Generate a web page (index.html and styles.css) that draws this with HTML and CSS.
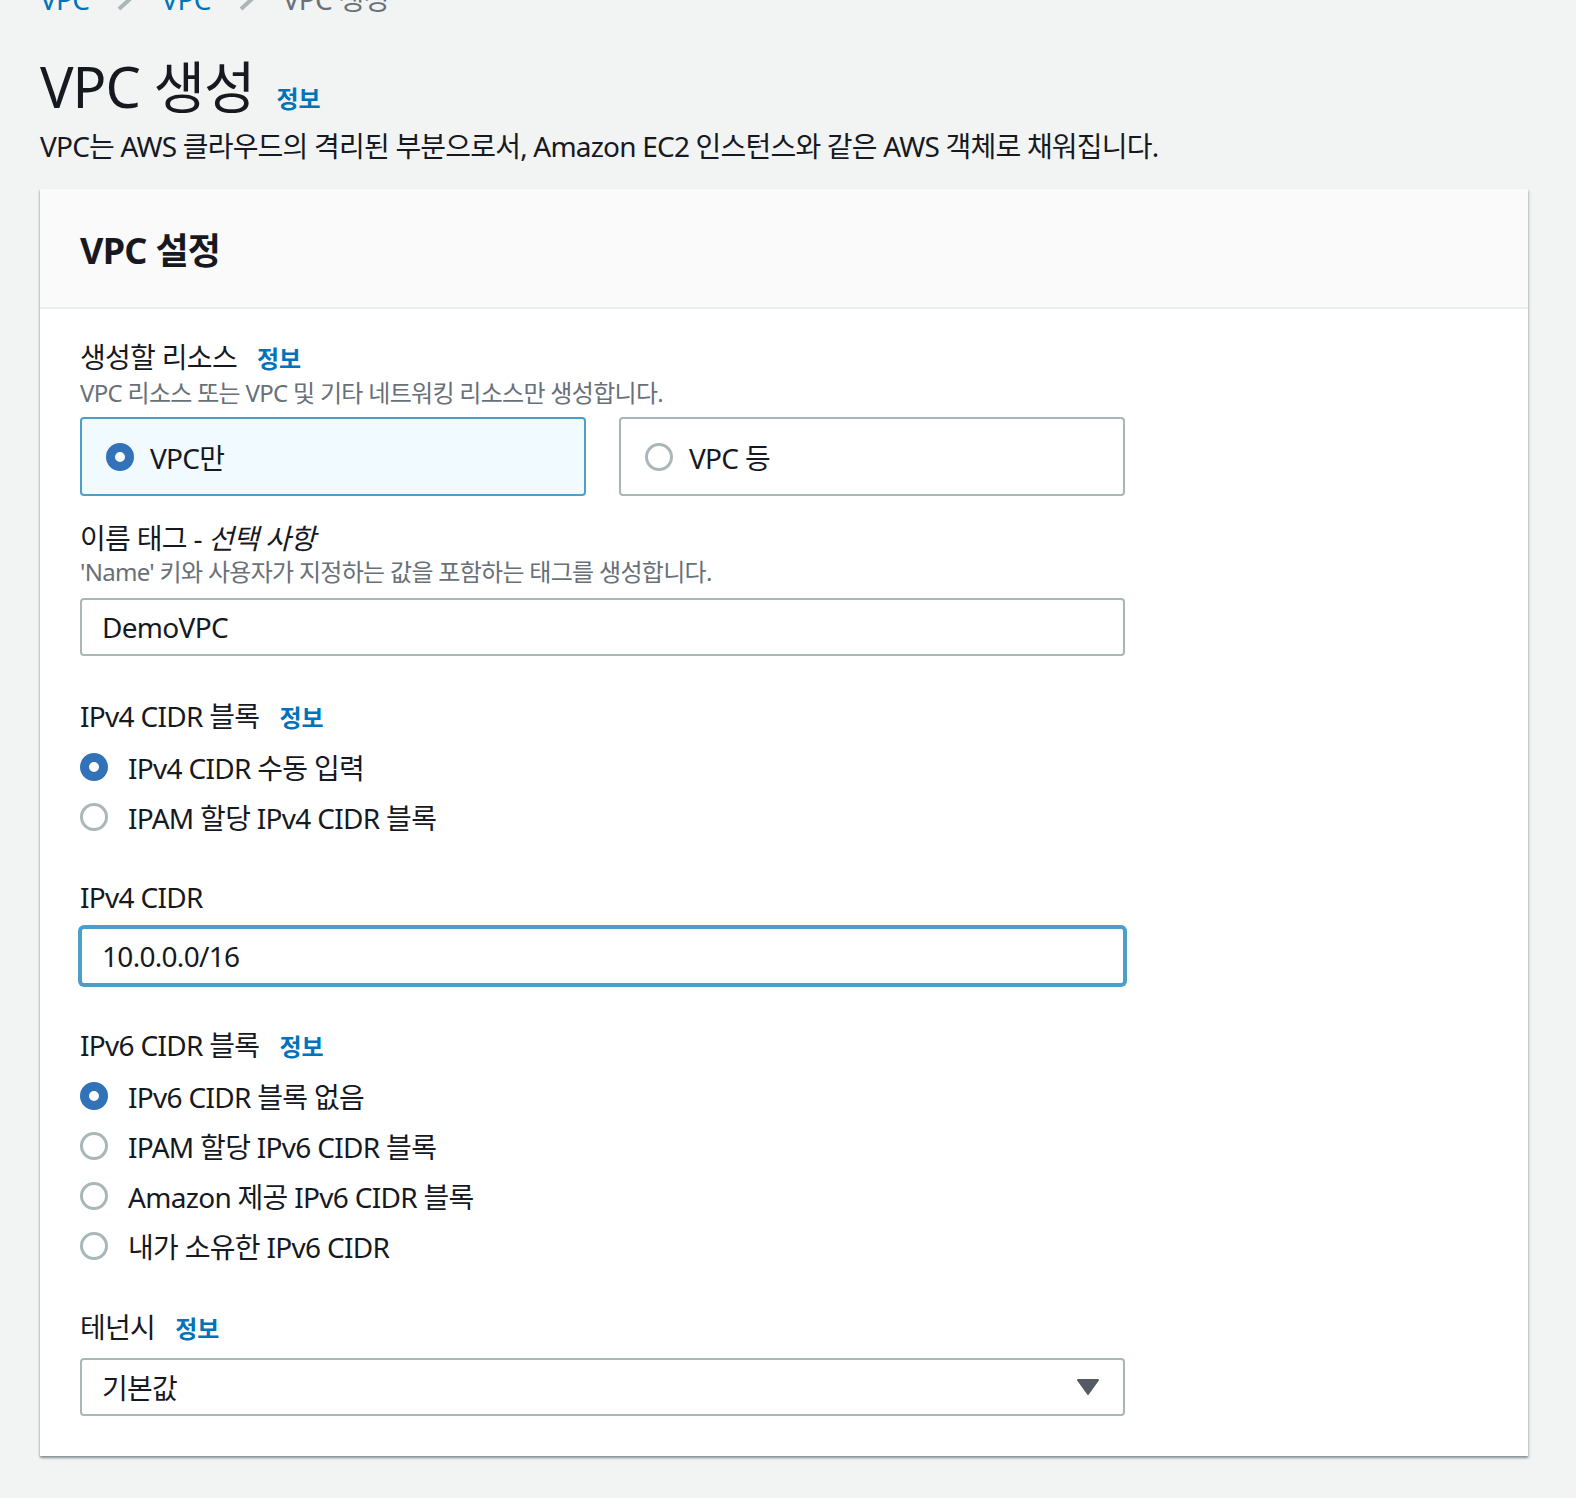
FILE: index.html
```html
<!DOCTYPE html>
<html lang="ko">
<head>
<meta charset="utf-8">
<title>VPC 생성</title>
<link rel="stylesheet" href="styles.css">
</head>
<body>
<nav class="breadcrumbs">
  <a class="crumb-link">VPC</a>
  <svg class="chev" width="20" height="24" viewBox="0 0 20 24"><path d="M4 2 L15 12 L4 22" fill="none" stroke="#aab7b8" stroke-width="4"/></svg>
  <a class="crumb-link">VPC</a>
  <svg class="chev" width="20" height="24" viewBox="0 0 20 24"><path d="M4 2 L15 12 L4 22" fill="none" stroke="#aab7b8" stroke-width="4"/></svg>
  <span class="crumb-current">VPC 생성</span>
</nav>

<header class="page-header">
  <div class="title-row">
    <h1 class="title">VPC 생성</h1>
    <a class="info-link info-lg">정보</a>
  </div>
  <p class="subtitle">VPC는 AWS 클라우드의 격리된 부분으로서, Amazon EC2 인스턴스와 같은 AWS 객체로 채워집니다.</p>
</header>

<section class="container">
  <div class="container-header">
    <h2>VPC 설정</h2>
  </div>
  <div class="container-body">

    <div class="field">
      <div class="label-row"><span class="label">생성할 리소스</span><a class="info-link">정보</a></div>
      <div class="desc">VPC 리소스 또는 VPC 및 기타 네트워킹 리소스만 생성합니다.</div>
      <div class="tiles">
        <div class="tile selected"><span class="radio checked"></span><span class="tile-text">VPC만</span></div>
        <div class="tile"><span class="radio"></span><span class="tile-text">VPC 등</span></div>
      </div>
    </div>

    <div class="field">
      <div class="label-row"><span class="label">이름 태그 - <em>선택 사항</em></span></div>
      <div class="desc">'Name' 키와 사용자가 지정하는 값을 포함하는 태그를 생성합니다.</div>
      <div class="input">DemoVPC</div>
    </div>

    <div class="field field-gap">
      <div class="label-row"><span class="label">IPv4 CIDR 블록</span><a class="info-link">정보</a></div>
      <div class="radio-group">
        <div class="radio-item"><span class="radio checked"></span><span>IPv4 CIDR 수동 입력</span></div>
        <div class="radio-item"><span class="radio"></span><span>IPAM 할당 IPv4 CIDR 블록</span></div>
      </div>
    </div>

    <div class="field field-gap2">
      <div class="label-row"><span class="label">IPv4 CIDR</span></div>
      <div class="input focused">10.0.0.0/16</div>
    </div>

    <div class="field field-gap3">
      <div class="label-row"><span class="label">IPv6 CIDR 블록</span><a class="info-link">정보</a></div>
      <div class="radio-group">
        <div class="radio-item"><span class="radio checked"></span><span>IPv6 CIDR 블록 없음</span></div>
        <div class="radio-item"><span class="radio"></span><span>IPAM 할당 IPv6 CIDR 블록</span></div>
        <div class="radio-item"><span class="radio"></span><span>Amazon 제공 IPv6 CIDR 블록</span></div>
        <div class="radio-item"><span class="radio"></span><span>내가 소유한 IPv6 CIDR</span></div>
      </div>
    </div>

    <div class="field field-gap4">
      <div class="label-row"><span class="label">테넌시</span><a class="info-link">정보</a></div>
      <div class="input select"><span>기본값</span>
        <svg class="caret" width="22" height="16" viewBox="0 0 22 16"><path d="M1 1 H21 L11 15 Z" fill="#545b64" stroke="#545b64" stroke-width="2" stroke-linejoin="round"/></svg>
      </div>
    </div>

  </div>
</section>
</body>
</html>
```

FILE: styles.css
```css
* { box-sizing: border-box; }
html, body { margin: 0; padding: 0; }
body {
  background: #f2f3f3;
  font-family: "Noto Sans", "Noto Sans CJK KR", sans-serif;
  color: #16191f;
  padding: 0 48px 40px 40px;
  font-size: 28px;
  letter-spacing: -0.7px;
}
.breadcrumbs {
  display: flex;
  align-items: center;
  height: 40px;
  margin-top: -21px;
  font-size: 28px;
  line-height: 40px;
}
.crumb-link { color: #0073bb; }
.crumb-current { color: #687078; }
.chev { margin: 0 26px; }

.page-header { margin-top: 31px; }
.title-row { display: flex; align-items: baseline; }
.title {
  margin: 0;
  font-size: 56px;
  font-weight: 400;
  line-height: 72px;
  letter-spacing: -1px;
}
.info-link {
  color: #0073bb;
  font-weight: 700;
  font-size: 24px;
  margin-left: 20px;
  letter-spacing: 0;
}
.info-lg { margin-left: 22px; }
.subtitle {
  margin: 4px 0 0 0;
  font-size: 28px;
  line-height: 40px;
  letter-spacing: -0.8px;
}

.container {
  margin-top: 23px;
  background: #fff;
  box-shadow: 0 2px 2px rgba(0,28,36,0.3), 1px 2px 3px rgba(0,28,36,0.15), -1px 1px 2px rgba(0,28,36,0.1);
}
.container-header {
  background: #fafafa;
  border-bottom: 2px solid #eaeded;
  height: 120px;
  padding: 0 40px;
  display: flex;
  align-items: center;
}
.container-header h2 {
  margin: 0;
  font-size: 36px;
  font-weight: 700;
}
.container-body {
  padding: 28px 40px 40px 40px;
  width: 1125px;
}
.field { display: flex; flex-direction: column; }
.label-row { display: flex; align-items: baseline; line-height: 40px; }
.label { font-size: 28px; }
.label em { font-style: italic; }
.desc { font-size: 24px; color: #687078; line-height: 32px; margin-top: -2px; }

.tiles { display: flex; gap: 33px; margin-top: 8px; margin-bottom: 22px; }
.tile {
  flex: 1;
  height: 79px;
  border: 2px solid #aab7b8;
  border-radius: 4px;
  display: flex;
  align-items: center;
  padding-left: 24px;
}
.tile.selected { background: #f1faff; border-color: #4b9fc9; }
.tile-text { margin-left: 16px; }

.radio {
  width: 28px; height: 28px;
  border-radius: 50%;
  border: 3px solid #aab7b8;
  background: #fff;
  flex: none;
}
.radio.checked { border: 9px solid #3172b8; }

.input {
  margin-top: 10px;
  height: 58px;
  border: 2px solid #aab7b8;
  border-radius: 4px;
  display: flex;
  align-items: center;
  padding-left: 20px;
  background: #fff;
}
.input.focused {
  border-color: #4b9fc9;
  box-shadow: 0 0 0 2px #4b9fc9;
  height: 58px;
}
.select { justify-content: space-between; padding-right: 24px; margin-top: 9px; }

.field-gap { margin-top: 40px; }
.field-gap2 { margin-top: 35px; }
.field-gap3 { margin-top: 40px; }
.field-gap4 { margin-top: 36px; }

.radio-group { display: flex; flex-direction: column; margin-top: 4px; }
.radio-item { display: flex; align-items: center; height: 50px; }
.radio-item .radio { margin-right: 20px; }
```
